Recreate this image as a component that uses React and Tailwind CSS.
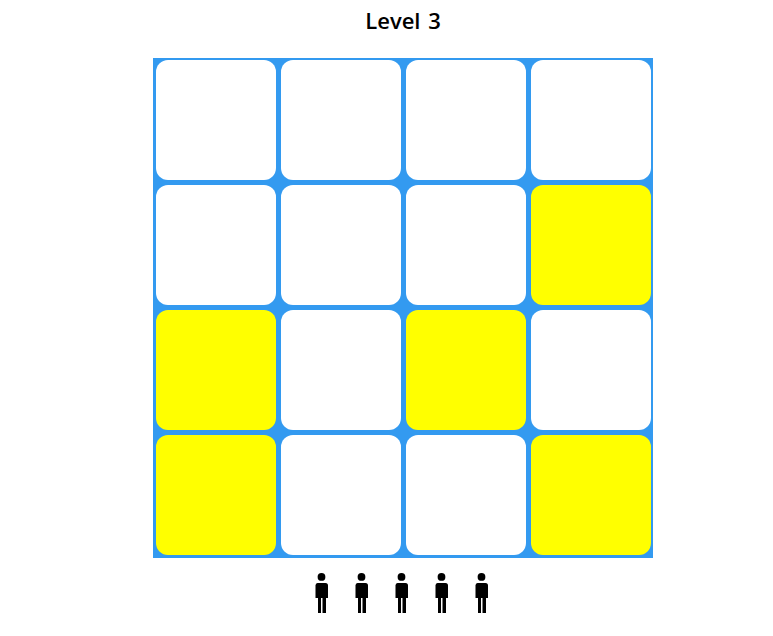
const yellow = new Set([7, 8, 10, 12, 15]);

function Person() {
  return (
    <svg width="14" height="42" viewBox="0 0 14 42" className="block shrink-0">
      <circle cx="6.5" cy="3.9" r="3.9" fill="#000" />
      <path d="M2.5 10H10.5Q13 10 13 12.5V25H0.5V12.5Q0.5 10 2.5 10Z" fill="#000" />
      <rect x="3" y="25" width="3" height="15" fill="#000" />
      <rect x="7.5" y="25" width="3.5" height="15" fill="#000" />
    </svg>
  );
}

export default function App() {
  return (
    <div className="w-[773px] h-[636px] bg-white overflow-hidden font-['Open_Sans',sans-serif]">
      <div className="ml-[153px] w-[500px] flex flex-col items-center">
        <h1 className="h-[58px] pt-[5px] text-[22px] leading-[30px] font-semibold text-black [word-spacing:2px]">Level 3</h1>
        <div className="w-[500px] h-[500px] bg-[#339af0] grid grid-cols-[repeat(4,120px)] grid-rows-[repeat(4,120px)] gap-[5px] pl-[3px] pt-[2px]">
          {Array.from({ length: 16 }, (_, i) => (
            <div key={i} className={`rounded-[12px] ${yellow.has(i) ? "bg-[#ffff00]" : "bg-white"}`} />
          ))}
        </div>
        <div className="mt-[15px] flex gap-[26px] mr-[2px]">
          {[0, 1, 2, 3, 4].map((i) => (
            <Person key={i} />
          ))}
        </div>
      </div>
    </div>
  );
}
